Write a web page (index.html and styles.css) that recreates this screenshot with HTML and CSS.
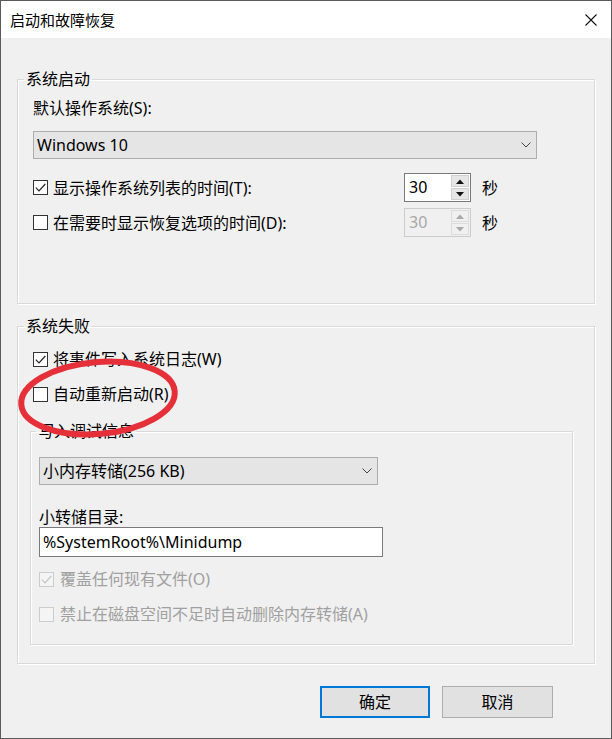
FILE: index.html
```html
<!DOCTYPE html>
<html lang="zh-CN">
<head>
<meta charset="utf-8">
<title>启动和故障恢复</title>
<link rel="stylesheet" href="styles.css">
</head>
<body>
<div class="window">
  <div class="titlebar">
    <span class="title">启动和故障恢复</span>
    <span class="close">
      <svg width="12" height="12" viewBox="0 0 12 12"><path d="M0.5 0.5 L11.5 11.5 M11.5 0.5 L0.5 11.5" stroke="#111" stroke-width="1.1" fill="none"/></svg>
    </span>
  </div>
  <div class="content">
    <fieldset class="group">
      <legend>系统启动</legend>
      <div class="group-inner g1">
        <div class="label">默认操作系统(S):</div>
        <div class="select select-os">
          <span>Windows 10</span>
          <svg class="chev" width="10" height="6" viewBox="0 0 10 6"><path d="M0.5 0.5 L5 5 L9.5 0.5" stroke="#444" stroke-width="1" fill="none"/></svg>
        </div>
        <div class="row row-first">
          <div class="check">
            <span class="box"><svg width="13" height="13" viewBox="0 0 13 13"><path d="M1.8 6.6 L5 9.8 L11.3 3" stroke="#222" stroke-width="1.2" fill="none"/></svg></span>
            <span>显示操作系统列表的时间(T):</span>
          </div>
          <div class="spin">
            <span class="spin-val">30</span>
            <span class="spin-btns">
              <span class="sbtn"><svg width="8" height="5" viewBox="0 0 8 5"><path d="M0 5 L4 0.5 L8 5 Z" fill="#111"/></svg></span>
              <span class="sbtn"><svg width="8" height="5" viewBox="0 0 8 5"><path d="M0 0 L4 4.5 L8 0 Z" fill="#111"/></svg></span>
            </span>
          </div>
          <span class="unit">秒</span>
        </div>
        <div class="row row-second">
          <div class="check">
            <span class="box"></span>
            <span>在需要时显示恢复选项的时间(D):</span>
          </div>
          <div class="spin disabled">
            <span class="spin-val">30</span>
            <span class="spin-btns">
              <span class="sbtn"><svg width="8" height="5" viewBox="0 0 8 5"><path d="M0 5 L4 0.5 L8 5 Z" fill="#a8a8a8"/></svg></span>
              <span class="sbtn"><svg width="8" height="5" viewBox="0 0 8 5"><path d="M0 0 L4 4.5 L8 0 Z" fill="#a8a8a8"/></svg></span>
            </span>
          </div>
          <span class="unit">秒</span>
        </div>
      </div>
    </fieldset>

    <fieldset class="group group-fail">
      <legend>系统失败</legend>
      <div class="group-inner g2">
        <div class="check line">
          <span class="box"><svg width="13" height="13" viewBox="0 0 13 13"><path d="M1.8 6.6 L5 9.8 L11.3 3" stroke="#222" stroke-width="1.2" fill="none"/></svg></span>
          <span>将事件写入系统日志(W)</span>
        </div>
        <div class="check line line-gap">
          <span class="box"></span>
          <span>自动重新启动(R)</span>
        </div>

        <fieldset class="group sub">
          <legend>写入调试信息</legend>
          <div class="sub-inner">
            <div class="select select-dump">
              <span>小内存转储(256 KB)</span>
              <svg class="chev" width="10" height="6" viewBox="0 0 10 6"><path d="M0.5 0.5 L5 5 L9.5 0.5" stroke="#444" stroke-width="1" fill="none"/></svg>
            </div>
            <div class="label label-dir">小转储目录:</div>
            <div class="textbox">%SystemRoot%\Minidump</div>
            <div class="check line disabled line-first">
              <span class="box"><svg width="13" height="13" viewBox="0 0 13 13"><path d="M1.8 6.6 L5 9.8 L11.3 3" stroke="#c4c4c4" stroke-width="1.2" fill="none"/></svg></span>
              <span>覆盖任何现有文件(O)</span>
            </div>
            <div class="check line disabled line-gap">
              <span class="box"></span>
              <span>禁止在磁盘空间不足时自动删除内存转储(A)</span>
            </div>
          </div>
        </fieldset>
      </div>
    </fieldset>

    <div class="buttons">
      <button class="btn primary">确定</button>
      <button class="btn">取消</button>
    </div>
  </div>

  <svg class="mark" width="200" height="110" viewBox="0 0 200 110">
    <ellipse cx="97" cy="57" rx="77" ry="36" transform="rotate(-5 97 57)" fill="none" stroke="#e5303a" stroke-width="6"/>
  </svg>
</div>
</body>
</html>
```

FILE: styles.css
```css
html, body {
  margin: 0;
  padding: 0;
  background: #f0f0f0;
}

.window {
  position: relative;
  width: 612px;
  height: 739px;
  box-sizing: border-box;
  border: 1px solid #5a5a5a;
  background: #f0f0f0;
  font-family: "Noto Sans", "Noto Sans CJK SC", sans-serif;
  font-size: 16px;
  color: #000;
  overflow: hidden;
}

.titlebar {
  height: 37px;
  background: #fff;
  display: flex;
  align-items: center;
  justify-content: space-between;
  padding: 0 14px 0 9px;
}

.title {
  font-size: 15px;
  line-height: 20px;
}

.close {
  display: flex;
  width: 12px;
  height: 12px;
}

.content {
  padding: 31px 16px 0 16px;
}

.group {
  margin: 0;
  padding: 0;
  min-width: 0;
  border: 1px solid #d9d9d9;
  box-shadow: inset 1px 1px 0 #fff, 1px 1px 0 #fff;
}

.group legend {
  margin-left: 6px;
  padding: 0 2px;
  line-height: 20px;
  font-size: 16px;
}

.group-inner {
  padding-left: 15px;
}

.g1 {
  padding-top: 9px;
  padding-bottom: 66px;
}

.label {
  line-height: 20px;
}

.select {
  box-sizing: border-box;
  height: 28px;
  border: 1px solid #adadad;
  background: #e5e5e5;
  display: flex;
  align-items: center;
  justify-content: space-between;
  padding: 0 5px 0 3px;
  line-height: 20px;
}

.select-os {
  width: 504px;
  margin-top: 13px;
}

.row {
  display: flex;
  align-items: center;
}

.row-first {
  margin-top: 14px;
}

.row-second {
  margin-top: 6px;
}

.row .check {
  width: 371px;
}

.check {
  display: flex;
  align-items: center;
  gap: 5px;
  line-height: 20px;
}

.box {
  box-sizing: border-box;
  width: 15px;
  height: 15px;
  border: 1px solid #333;
  background: #fff;
  display: flex;
  align-items: center;
  justify-content: center;
  flex: none;
}

.check.disabled {
  color: #a0a0a0;
  gap: 6px;
}

.check.disabled .box {
  border-color: #cccccc;
  background: #f4f4f4;
}

.spin {
  box-sizing: border-box;
  width: 67px;
  height: 29px;
  border: 1px solid #7a7a7a;
  background: #fff;
  display: flex;
  justify-content: space-between;
  padding: 1px 1px 1px 4px;
}

.spin-val {
  line-height: 25px;
}

.spin-btns {
  display: flex;
  flex-direction: column;
  gap: 1px;
  width: 18px;
}

.sbtn {
  flex: 1;
  display: flex;
  align-items: center;
  justify-content: center;
  background: #e6e6e6;
  border: 1px solid #d0d0d0;
}

.spin.disabled {
  border-color: #cccccc;
  background: #f0f0f0;
  color: #a8a8a8;
}

.spin.disabled .sbtn {
  background: #f0f0f0;
  border-color: #dcdcdc;
}

.unit {
  margin-left: 11px;
  line-height: 20px;
}

.group-fail {
  margin-top: 12px;
}

.g2 {
  padding-top: 13px;
  padding-bottom: 18px;
}

.line-gap {
  margin-top: 15px;
}

.sub {
  margin: 17px 0 0 -3px;
  width: 543px;
  box-sizing: border-box;
}

.sub legend {
  margin-left: 5px;
}

.sub-inner {
  padding: 16px 0 20px 8px;
}

.select-dump {
  width: 339px;
}

.label-dir {
  margin-top: 22px;
}

.textbox {
  box-sizing: border-box;
  width: 344px;
  height: 30px;
  border: 1px solid #7a7a7a;
  background: #fff;
  padding: 0 3px;
  line-height: 28px;
}

.line-first {
  margin-top: 12px;
}

.buttons {
  display: flex;
  justify-content: flex-end;
  gap: 12px;
  margin-top: 22px;
  margin-right: 42px;
}

.btn {
  box-sizing: border-box;
  width: 111px;
  height: 32px;
  background: #e1e1e1;
  border: 1px solid #adadad;
  font-family: "Noto Sans", "Noto Sans CJK SC", sans-serif;
  font-size: 16px;
  color: #000;
  padding: 0;
  line-height: 20px;
}

.btn.primary {
  width: 110px;
  border: 2px solid #0078d7;
}

.mark {
  position: absolute;
  left: 0;
  top: 340px;
  pointer-events: none;
}
```
